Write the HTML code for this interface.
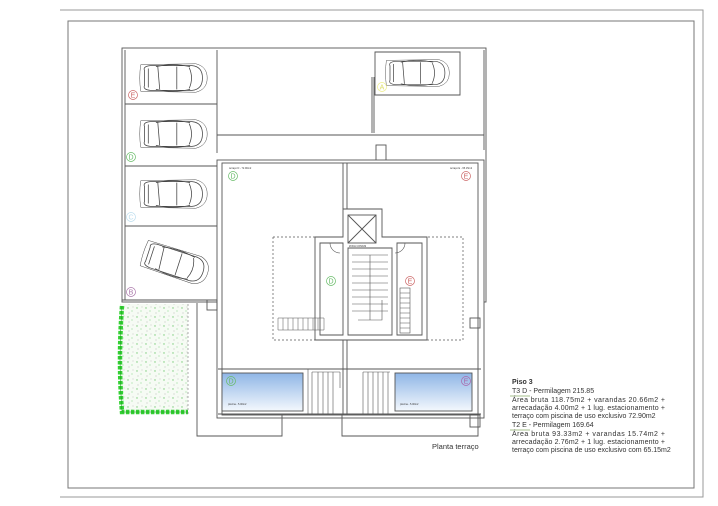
<!DOCTYPE html>
<html><head><meta charset="utf-8"><style>
html,body{margin:0;padding:0;background:#fff;}
svg{display:block}
.t{font-family:"Liberation Sans",sans-serif;}
</style></head><body>
<svg width="718" height="506" viewBox="0 0 718 506" xmlns="http://www.w3.org/2000/svg">
<defs>
<linearGradient id="pool" x1="0" y1="0" x2="0" y2="1">
<stop offset="0" stop-color="#8fb6e6"/><stop offset="1" stop-color="#f4f8fd"/>
</linearGradient>
<pattern id="spk" width="9" height="9" patternUnits="userSpaceOnUse">
<rect width="9" height="9" fill="#f6fbf4"/>
<circle cx="2" cy="2" r="0.7" fill="#7c7"/><circle cx="6" cy="5" r="0.6" fill="#9d9"/><circle cx="3" cy="7" r="0.5" fill="#aaa"/><circle cx="7" cy="1" r="0.5" fill="#bbb"/>
</pattern>
<g id="car" fill="none" stroke="#444" stroke-width="0.8">
<path d="M-30,-8 Q-32,-12 -24,-13 L20,-13 Q31,-12 31,0 Q31,12 20,13 L-24,13 Q-32,12 -30,8 Z"/>
<path d="M-26,-10 L-26,10 M-16,-12 L-14,12 M4,-12 L4,12 M17,-11 Q22,0 17,11"/>
<path d="M-18,-12 Q0,-16 18,-12 M-18,12 Q0,16 18,12"/>
<path d="M-34,-14 Q-36,0 -34,14 L24,15 Q36,12 36,0 Q36,-12 24,-15 Z" stroke-width="0.5"/>
</g>
</defs>
<rect width="718" height="506" fill="#fff"/>
<path d="M60,10 H703 V497 H60" fill="none" stroke="#999" stroke-width="1"/>
<rect x="68" y="21" width="626" height="467" fill="none" stroke="#777" stroke-width="1"/>

<g fill="none" stroke="#555" stroke-width="0.9">
<rect x="122" y="48" width="364" height="254"/>
<path d="M125,50 V300 M217,50 V153 M217,135 H484 M125,104 H217 M125,166 H217 M125,226 H217 M122,300 H217"/>
<path d="M375,52 H460 V95 H375 Z"/>
<path d="M372,77 V133 M374,77 V133"/>
<path d="M484,50 V150"/>
<rect x="376" y="145" width="10" height="20" fill="#fff"/>
<rect x="217" y="160" width="267" height="258" fill="#fff"/>
<rect x="222" y="163" width="256" height="252"/>
<path d="M343,163 V209 M347,163 V209 M343,340 V415 M347,340 V415"/>
<path d="M343,209 H382 V237 H427 V340 H315 V237 H343 Z" fill="#fff"/>
<rect x="348" y="215" width="28" height="28"/>
<path d="M348,215 L376,243 M376,215 L348,243"/>
<path d="M320,243 H343 V335 H320 Z M348,248 H392 V335 H348 Z M397,243 H422 V335 H397 Z"/>
<path d="M352,255 H388 M352,262 H388 M352,269 H388 M352,276 H388 M352,283 H388 M352,290 H388 M352,297 H388 M352,304 H388 M352,311 H388 M370,255 V320 M358,320 H382 V300" stroke-width="0.6"/>
<rect x="400" y="288" width="10" height="45" stroke-width="0.6"/>
<path d="M400,293 H410 M400,298 H410 M400,303 H410 M400,308 H410 M400,313 H410 M400,318 H410 M400,323 H410 M400,328 H410" stroke-width="0.5"/>
<path d="M278,318 H324 V330 H278 Z M283,318 V330 M288,318 V330 M293,318 V330 M298,318 V330 M303,318 V330 M308,318 V330 M313,318 V330 M318,318 V330" stroke-width="0.5"/>
<path d="M273,237 V340 H315 M427,340 H463 V237 H427 M273,237 H315" stroke-dasharray="2,2" stroke-width="0.7"/>
<path d="M330,243 A10,10 0 0 0 340,253 M405,243 A10,10 0 0 1 395,253" stroke-width="0.6"/>
<rect x="207" y="300" width="10" height="10"/><rect x="470" y="318" width="10" height="10"/>
<path d="M218,369 H481 M218,414 H481"/>
<rect x="222" y="373" width="81" height="38" fill="url(#pool)"/>
<rect x="395" y="373" width="77" height="38" fill="url(#pool)"/>
<path d="M308,369 V414 M312,372 H340 M312,372 V414 M318,372 V414 M323,372 V414 M328,372 V414 M333,372 V414 M340,372 V388 M363,372 V414 M368,372 V414 M373,372 V414 M378,372 V414 M383,372 V414 M388,372 V414 M363,372 H390" stroke-width="0.6"/>
<path d="M197,303 V436 H282 V415 M342,415 V436 H478 V415"/>
<rect x="470" y="415" width="10" height="12"/>
</g>
<use href="#car" transform="translate(173,78) scale(0.95)"/>
<use href="#car" transform="translate(173,134) scale(0.95)"/>
<use href="#car" transform="translate(173,194) scale(0.95)"/>
<use href="#car" transform="translate(175,263) rotate(18) scale(0.95)"/>
<use href="#car" transform="translate(417,73) scale(0.9)"/>
<rect x="120" y="304" width="68" height="110" fill="url(#spk)"/>
<path d="M122,306 Q118,360 122,412 H188" fill="none" stroke="#33d033" stroke-width="4.5" stroke-dasharray="3.5,1.5"/>
<path d="M122,306 Q118,360 122,412 H188" fill="none" stroke="#1a9a1a" stroke-width="0.5"/>
<path d="M188,304 V414" stroke="#777" stroke-dasharray="2,2" stroke-width="0.6"/>
<g font-family="Liberation Sans,sans-serif" font-size="7" text-anchor="middle" fill="none" stroke-width="0.7">
<circle cx="133" cy="95" r="4.5" stroke="#c66"/><text x="133" y="97.5" fill="#c66" stroke="none">E</text>
<circle cx="131" cy="157" r="4.5" stroke="#6b6"/><text x="131" y="159.5" fill="#6b6" stroke="none">D</text>
<circle cx="131" cy="217" r="4.5" stroke="#bde"/><text x="131" y="219.5" fill="#bde" stroke="none">C</text>
<circle cx="131" cy="292" r="4.5" stroke="#a7a"/><text x="131" y="294.5" fill="#a7a" stroke="none">B</text>
<circle cx="382" cy="87" r="4.5" stroke="#ee8"/><text x="382" y="89.5" fill="#dd6" stroke="none">A</text>
<circle cx="233" cy="176" r="4.5" stroke="#6b6"/><text x="233" y="178.5" fill="#6b6" stroke="none">D</text>
<circle cx="466" cy="176" r="4.5" stroke="#c66"/><text x="466" y="178.5" fill="#c66" stroke="none">E</text>
<circle cx="331" cy="281" r="4.5" stroke="#6b6"/><text x="331" y="283.5" fill="#6b6" stroke="none">D</text>
<circle cx="410" cy="281" r="4.5" stroke="#c66"/><text x="410" y="283.5" fill="#c66" stroke="none">E</text>
<circle cx="231" cy="381" r="4.5" stroke="#6b6"/><text x="231" y="383.5" fill="#6b6" stroke="none">D</text>
<circle cx="466" cy="381" r="4.5" stroke="#a6a"/><text x="466" y="383.5" fill="#a6a" stroke="none">E</text>
</g>
<g font-family="Liberation Sans,sans-serif" font-size="2.5" fill="#333">
<text x="229" y="169">terraço D - 72.90m2</text><text x="450" y="169">terraço E - 65.15m2</text>
<text x="349" y="247">ZONA COMUM</text><text x="228" y="405">piscina - 5.00m2</text><text x="400" y="405">piscina - 5.00m2</text>
</g>
<text x="432" y="449" class="t" font-size="7.5" fill="#333">Planta terraço</text>
<path d="M510,396 H530 M510,430 H530" stroke="#8a6" stroke-width="0.7"/>
<g class="t" font-size="7" fill="#333">
<text x="512" y="384" font-weight="bold">Piso 3</text>
<text x="512" y="393">T3 D - Permilagem 215.85</text>
<text x="512" y="402" textLength="153" lengthAdjust="spacing">Área  bruta  118.75m2  +  varandas  20.66m2  +</text>
<text x="512" y="410" textLength="153" lengthAdjust="spacing">arrecadação  4.00m2  +  1  lug.  estacionamento  +</text>
<text x="512" y="418">terraço com piscina de uso exclusivo 72.90m2</text>
<text x="512" y="427">T2 E - Permilagem 169.64</text>
<text x="512" y="436" textLength="153" lengthAdjust="spacing">Área  bruta  93.33m2  +  varandas  15.74m2  +</text>
<text x="512" y="444" textLength="153" lengthAdjust="spacing">arrecadação  2.76m2  +  1  lug.  estacionamento  +</text>
<text x="512" y="452">terraço com piscina de uso exclusivo com 65.15m2</text>
</g>
</svg>
</body></html>
